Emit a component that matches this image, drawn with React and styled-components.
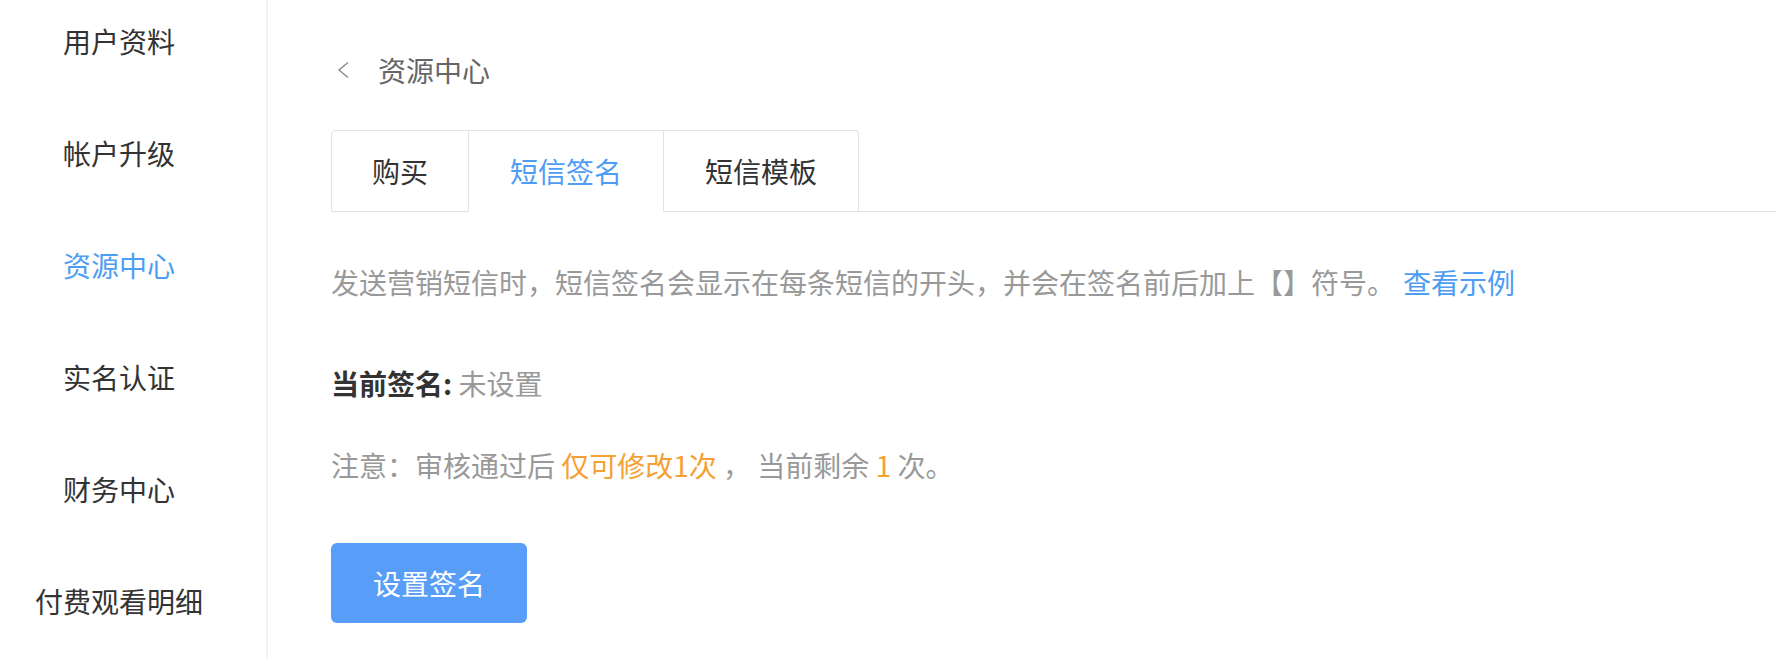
import React from "react";
import styled, { createGlobalStyle } from "styled-components";

const menu = ["用户资料", "帐户升级", "资源中心", "实名认证", "财务中心", "付费观看明细"];
const tabs = ["购买", "短信签名", "短信模板"];

const App = () => {
  return (
    <>
      <GlobalStyle />
      <Page>
        <Sidebar>
          {menu.map((m) => (
            <MenuItem key={m} $active={m === "资源中心"}>
              {m}
            </MenuItem>
          ))}
        </Sidebar>
        <Main>
          <Breadcrumb>
            <BackIcon viewBox="0 0 12 18">
              <polyline points="11,1.5 2,9 11,16.5" />
            </BackIcon>
            <span>资源中心</span>
          </Breadcrumb>
          <TabBar>
            {tabs.map((t) => (
              <Tab key={t} $active={t === "短信签名"}>
                {t}
              </Tab>
            ))}
          </TabBar>
          <Desc>
            发送营销短信时，短信签名会显示在每条短信的开头，并会在签名前后加上【】符号。
            <Link>查看示例</Link>
          </Desc>
          <Current>
            <Label>当前签名:</Label> <Muted>未设置</Muted>
          </Current>
          <Notice>
            注意：审核通过后 <Warn>仅可修改1次</Warn> ， 当前剩余 <Warn>1</Warn> 次。
          </Notice>
          <Button>设置签名</Button>
        </Main>
      </Page>
    </>
  );
};
export default App;

const GlobalStyle = createGlobalStyle`
  body {
    margin: 0;
    background: #fff;
    font-family: "Noto Sans CJK SC", "Noto Sans", sans-serif;
  }
`;
const Page = styled.div`
  display: flex;
  height: 658px;
  overflow: hidden;
`;
const Sidebar = styled.div`
  width: 238px;
  padding-right: 28px;
  border-right: 2px solid #f3f3f6;
  flex-shrink: 0;
`;
const MenuItem = styled.div`
  height: 112px;
  box-sizing: border-box;
  padding-top: 21px;
  text-align: center;
  font-size: 28px;
  line-height: 40px;
  color: ${(p) => (p.$active ? "#4d9df5" : "#333")};
`;
const Main = styled.div`
  flex: 1;
  padding: 50px 0 0 63px;
`;
const Breadcrumb = styled.div`
  display: flex;
  align-items: center;
  gap: 29px;
  font-size: 28px;
  line-height: 40px;
  color: #666;
`;
const BackIcon = styled.svg`
  width: 12px;
  height: 18px;
  margin-left: 6px;
  fill: none;
  stroke: #8a8a8a;
  stroke-width: 1.4;
`;
const TabBar = styled.div`
  display: flex;
  margin-top: 40px;
  border-bottom: 1px solid #e2e2ea;
`;
const Tab = styled.div`
  height: 80px;
  padding: 0 41px;
  display: flex;
  align-items: center;
  font-size: 28px;
  color: ${(p) => (p.$active ? "#4d9df5" : "#333")};
  background: #fff;
  border: 1px solid #e2e2ea;
  border-bottom-color: ${(p) => (p.$active ? "#fff" : "#e2e2ea")};
  margin-bottom: -1px;
  &:first-child {
    padding: 0 40px;
    border-top-left-radius: 4px;
  }
  &:last-child {
    border-top-right-radius: 4px;
  }
  & + & {
    border-left: none;
  }
`;
const Desc = styled.div`
  margin-top: 50px;
  font-size: 28px;
  line-height: 40px;
  color: #999;
`;
const Link = styled.span`
  margin-left: 8px;
  color: #4d9df5;
`;
const Current = styled.div`
  margin-top: 61px;
  font-size: 28px;
  line-height: 40px;
`;
const Label = styled.span`
  font-weight: bold;
  color: #333;
`;
const Muted = styled.span`
  color: #999;
`;
const Notice = styled.div`
  margin-top: 42px;
  font-size: 28px;
  line-height: 40px;
  color: #999;
`;
const Warn = styled.span`
  color: #f5a033;
`;
const Button = styled.button`
  display: block;
  margin-top: 58px;
  width: 196px;
  height: 80px;
  border: none;
  border-radius: 6px;
  background: #589ef8;
  color: #fff;
  font-family: inherit;
  font-size: 28px;
`;
